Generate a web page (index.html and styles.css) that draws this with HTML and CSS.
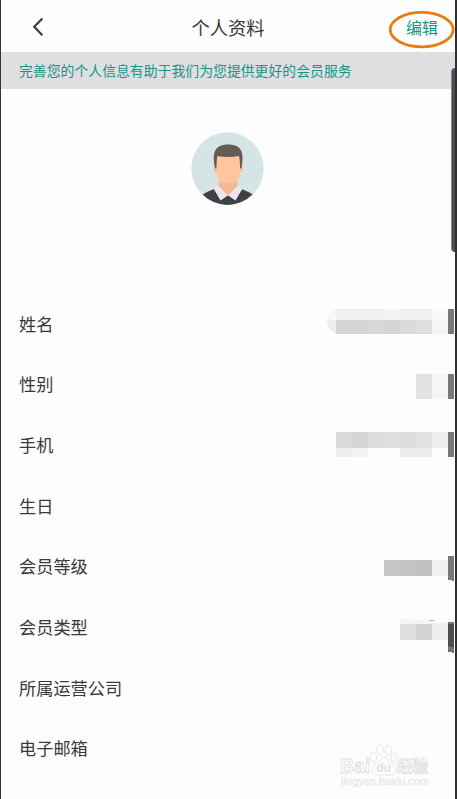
FILE: index.html
```html
<!DOCTYPE html>
<html lang="zh-CN">
<head>
<meta charset="utf-8">
<title>个人资料</title>
<link rel="stylesheet" href="styles.css">
</head>
<body>
<main class="screen">
  <header class="bar">
    <svg class="back" viewBox="0 0 12 20"><path d="M10.400 1.400 2.200 9.800l8.200 8.400"/></svg>
    <h1 class="title">个人资料</h1>
    <span class="edit">编辑</span>
  </header>
  <p class="notice">完善您的个人信息有助于我们为您提供更好的会员服务</p>
  <section class="profile">
    <svg class="avatar" viewBox="0 0 73 73">
      <defs><clipPath id="disc"><circle cx="36.5" cy="36.5" r="36.2"/></clipPath></defs>
      <g clip-path="url(#disc)">
        <rect width="73" height="73" fill="#d5e4e4"/>
        <path d="M28 45h18v13l-9 7-9-7z" fill="#f4b994"/>
        <path d="M9 65Q13 60 28 55.500L37 66 46 55.500Q60 60 65 65V74H9z" fill="#404146"/>
        <path d="M28 54.500 37 63.500 29.500 68.500 22.500 56.500zM46 54.500 37 63.500 44.500 68.500 51.500 56.500z" fill="#efe4f0"/>
        <path d="M37 63.500 44 69v5H30v-5z" fill="#404146"/>
        <ellipse cx="24.600" cy="36.500" rx="2" ry="4" fill="#fbbd92"/>
        <ellipse cx="49.900" cy="36.500" rx="2" ry="4" fill="#fbbd92"/>
        <path d="M25 22H49.500V38Q49.500 51.500 37.200 51.500T25 38z" fill="#ffc59d"/>
        <path d="M24.200 36.500C20 18 26 12.500 37.200 12.500S54.500 18 50.300 36.500H49Q49 28 48 24 37 26 26.500 24 25.500 28 25.500 36.500z" fill="#645c53"/>
      </g>
    </svg>
  </section>
  <ul class="fields">
    <li>姓名</li>
    <li>性别</li>
    <li>手机</li>
    <li>生日</li>
    <li>会员等级</li>
    <li>会员类型</li>
    <li>所属运营公司</li>
    <li>电子邮箱</li>
  </ul>
</main>
<div class="handle"></div>
<svg class="overlay" viewBox="0 0 457 799">
  <ellipse cx="421.700" cy="29.600" rx="31.500" ry="17.200" fill="none" stroke="#e87c10" stroke-width="2.800"/>
  <g shape-rendering="crispEdges">
    <path d="M336 309Q327 313 327 320H336z" fill="#f7f7f7"/>
    <path d="M327 320H336V334Q327 331 327 320z" fill="#ededed"/>
    <path d="M336 309h48v11h-48z" fill="#f0f0f0"/>
    <path d="M384 309h16v11h-16z" fill="#f4f4f4"/>
    <path d="M400 309h16v11h-16z" fill="#f0f0f0"/>
    <path d="M416 309h16v11h-16z" fill="#f0f0f2"/>
    <path d="M432 309h16v11h-16z" fill="#f9f9f9"/>
    <path d="M336 320h32v14h-32z" fill="#d6d6d6"/>
    <path d="M368 320h16v14h-16z" fill="#d8d8d8"/>
    <path d="M384 320h16v14h-16z" fill="#d6d6d6"/>
    <path d="M400 320h16v14h-16z" fill="#dadadd"/>
    <path d="M416 320h16v14h-16z" fill="#dfdfdf"/>
    <path d="M432 320h16v14h-16z" fill="#f5f5f5"/>
    <path d="M448 309h6v25h-6zM448 374h6v25h-6zM448 432h6v25h-6z" fill="#777879"/>
    <path d="M416 374h16v25h-16z" fill="#e2e2e2"/>
    <path d="M432 374h16v25h-16z" fill="#f5f5f5"/>
    <path d="M320 432h16v16h-16z" fill="#fcfcfc"/>
    <path d="M336 432h16v16h-16z" fill="#dadada"/>
    <path d="M352 432h16v16h-16z" fill="#d4d4d4"/>
    <path d="M368 432h16v16h-16z" fill="#dcdcdc"/>
    <path d="M384 432h16v16h-16z" fill="#e0e0e0"/>
    <path d="M400 432h16v16h-16z" fill="#dddddd"/>
    <path d="M416 432h16v16h-16z" fill="#e2e2e2"/>
    <path d="M432 432h16v16h-16z" fill="#efefef"/>
    <path d="M336 448h16v9h-16z" fill="#eeeeee"/>
    <path d="M352 448h16v9h-16z" fill="#f2f2f2"/>
    <path d="M400 448h32v9h-32z" fill="#ebebeb"/>
    <path d="M384 555h48v5h-48z" fill="#fbfbfb"/>
    <path d="M384 560h16v16h-16z" fill="#c7c7c7"/>
    <path d="M400 560h16v16h-16z" fill="#c3c3c3"/>
    <path d="M416 560h16v16h-16z" fill="#c0c0c0"/>
    <path d="M432 560h16v16h-16z" fill="#f0f0f0"/>
    <path d="M448 556h6v25h-2v-1h-4z" fill="#777879"/>
    <path d="M400 618h4v1h8v1h11v-1h2v1h4v2h19v2h-48z" fill="#f4f4f4"/>
    <path d="M429 620h5v1h-5z" fill="#a9a9a9"/>
    <path d="M400 624h16v16h-16z" fill="#dedee1"/>
    <path d="M416 624h16v16h-16z" fill="#d3d3d3"/>
    <path d="M432 624h16v16h-16z" fill="#eeeeee"/>
    <path d="M448 622h6v31h-2v-1h-4z" fill="#747576"/>
    <path d="M448 624h6v23h-4v-1h-2z" fill="#4c4d4f"/>
  </g>
  <g class="mark">
    <text x="340" y="773" font-size="20" font-weight="700" textLength="30" lengthAdjust="spacingAndGlyphs">Bai</text>
    <path d="M375 765Q379 762 381 759 384 755 387 759 389 762 393 765C400 772 393 777 384 774.500 375 777 368 772 375 765z"/>
    <ellipse cx="373.500" cy="757.500" rx="3.200" ry="4.500"/>
    <ellipse cx="380" cy="749.700" rx="3.500" ry="4.500"/>
    <ellipse cx="388.300" cy="750" rx="3.300" ry="4.500"/>
    <ellipse cx="394" cy="757.500" rx="3.200" ry="4.300"/>
    <text class="du" x="376.500" y="771.500" font-size="12" font-weight="700">du</text>
    <text x="397" y="772" class="cjk" font-size="15.500" font-weight="700">经验</text>
    <text class="url" x="341" y="785" font-size="10.500" textLength="88" lengthAdjust="spacingAndGlyphs">jingyan.baidu.com</text>
  </g>
</svg>
</body>
</html>
```
FILE: styles.css
```css
* { box-sizing: border-box; }

body {
  margin: 0;
  height: 799px;
  overflow: hidden;
  position: relative;
  background: #fdfdfd;
  color: #38393b;
  font-family: "Noto Sans CJK SC", sans-serif;
}

.screen {
  height: 799px;
  border-left: 1px solid #343538;
  border-right: 2px solid #2f3033;
}

.bar {
  height: 52px;
  padding: 2px 17px 0 31px;
  display: grid;
  grid-template-columns: 80px 1fr 80px;
  align-items: center;
}

.back {
  width: 12px;
  height: 20px;
  fill: none;
  stroke: #3c3d40;
  stroke-width: 2.200;
}

.title {
  margin: 0 0 0 -14px;
  text-align: center;
  font-size: 18.3px;
  font-weight: 400;
  line-height: 28px;
}

.edit {
  text-align: right;
  font-size: 16px;
  line-height: 24px;
  color: #159587;
}

.notice {
  margin: 0;
  height: 37px;
  padding-left: 18px;
  background: #dfdfe1;
  color: #159587;
  font-size: 13.87px;
  line-height: 36px;
  white-space: nowrap;
}

.profile {
  height: 204.5px;
  padding: 43px 0 0 190px;
}

.avatar {
  display: block;
  width: 73px;
  height: 73px;
}

.fields {
  list-style: none;
  margin: 0;
  padding: 0 0 0 18px;
  font-size: 17.2px;
}

.fields li {
  height: 60.7px;
  line-height: 60.7px;
}

.handle {
  position: absolute;
  left: 451px;
  top: 68px;
  width: 4px;
  height: 184px;
  border-left: 1px solid #898a8b;
  border-radius: 4px 0 0 4px;
  background: #4b4c4e;
}

.overlay {
  position: absolute;
  left: 0;
  top: 0;
  width: 457px;
  height: 799px;
}

.mark {
  fill: #fdfdfd;
  stroke: #dedede;
  stroke-width: 0.8;
  font-family: "Liberation Sans", sans-serif;
}

.cjk { font-family: "Noto Sans CJK SC", sans-serif; }

.du {
  fill: #e2e2e2;
  stroke: none;
}

.url {
  fill: #eeeeee;
  stroke: #e8e8e8;
  stroke-width: 0.4;
}
```
